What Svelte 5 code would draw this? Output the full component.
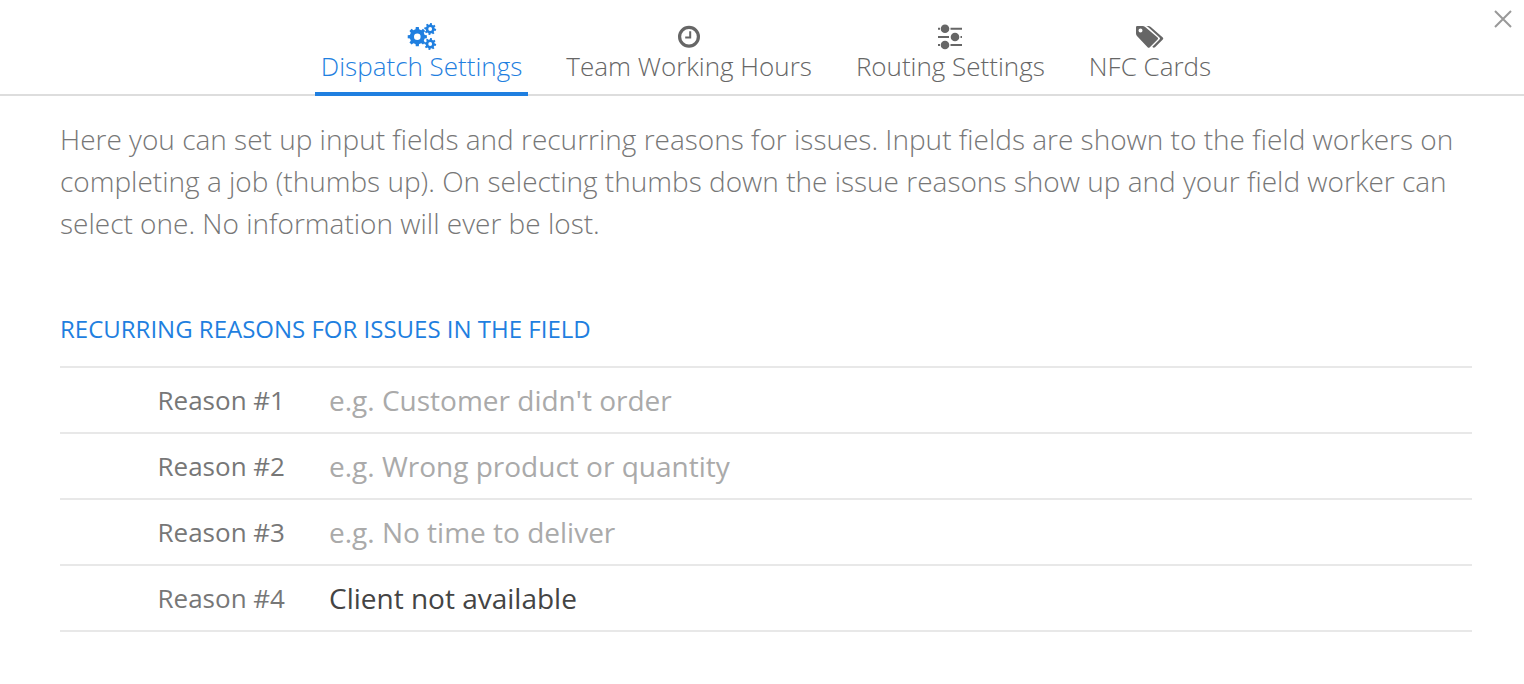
<script lang="ts">
	type Tab = {
		id: string;
		label: string;
	};

	type Reason = {
		placeholder: string;
		value: string;
	};

	const tabs: Tab[] = [
		{ id: "dispatch", label: "Dispatch Settings" },
		{ id: "hours", label: "Team Working Hours" },
		{ id: "routing", label: "Routing Settings" },
		{ id: "nfc", label: "NFC Cards" }
	];

	let active = $state("dispatch");

	let reasons: Reason[] = $state([
		{ placeholder: "e.g. Customer didn't order", value: "" },
		{ placeholder: "e.g. Wrong product or quantity", value: "" },
		{ placeholder: "e.g. No time to deliver", value: "" },
		{ placeholder: "", value: "Client not available" }
	]);

	// outline of a cog with a round hole, teeth start at the given angle
	function gear(cx: number, cy: number, outer: number, inner: number, hole: number, teeth: number, start = 0) {
		const step = (Math.PI * 2) / teeth;
		const points: string[] = [];
		for (let i = 0; i < teeth; i++) {
			const a = start + i * step;
			for (const [r, offset] of [[inner, -0.3], [outer, -0.2], [outer, 0.2], [inner, 0.3]]) {
				const x = cx + r * Math.cos(a + offset * step);
				const y = cy + r * Math.sin(a + offset * step);
				points.push(`${x.toFixed(2)} ${y.toFixed(2)}`);
			}
		}
		return `M${points.join("L")}ZM${cx - hole} ${cy}a${hole} ${hole} 0 1 0 ${hole * 2} 0a${hole} ${hole} 0 1 0 ${-hole * 2} 0Z`;
	}
</script>

<div class="settings">
	<header class="settings__header">
		<nav class="tabs" aria-label="Settings">
			{#each tabs as tab}
				<button
					type="button"
					class="tab"
					class:tab--active={active === tab.id}
					aria-current={active === tab.id ? "page" : undefined}
					onclick={() => (active = tab.id)}
				>
					<svg class="tab__icon" viewBox="0 0 30 28" aria-hidden="true">
						{#if tab.id === "dispatch"}
							<g fill="currentColor" fill-rule="evenodd">
								<path d={gear(10.3, 14.7, 9.7, 7.6, 3.3, 8)} />
								<path d={gear(23.2, 7, 6, 4.5, 1.9, 8, 0.15)} />
								<path d={gear(23.2, 22, 6, 4.5, 1.9, 8, 0.15)} />
							</g>
						{:else if tab.id === "hours"}
							<g fill="none" stroke="currentColor">
								<circle cx="15" cy="14.7" r="9.4" stroke-width="3.2" />
								<path d="M16.2 9.3v6.1h-5" stroke-width="2" />
							</g>
						{:else if tab.id === "routing"}
							<path
								d="M3 6.7h2M15.5 6.7H27M3 15h11M25.5 15H27M3 23h2M15.5 23H27"
								fill="none"
								stroke="currentColor"
								stroke-width="2"
							/>
							<g fill="currentColor">
								<circle cx="10" cy="6.7" r="4.3" />
								<circle cx="20" cy="15" r="4.3" />
								<circle cx="10" cy="23" r="4.3" />
							</g>
						{:else}
							<g fill="currentColor">
								<path
									fill-rule="evenodd"
									d="M1 5.2Q1 4 2.2 4H7.5Q9 4 10.2 5.1L22.6 15.4Q23.6 16.4 22.6 17.4L14.8 25.3Q13.7 26.3 12.6 25.3L2.2 14.2Q1 13 1 11.4ZM3.5 8.4a2 2 0 1 0 4 0a2 2 0 1 0-4 0Z"
								/>
								<path
									d="M10.8 4h2.4Q14.6 4 15.8 5.1L27.8 15.4Q28.8 16.4 27.8 17.4L20 25.3Q18.7 26.4 17.3 24.8L24.5 17.6Q25.6 16.4 24.5 15.4L13 5.1Q12 4.2 10.8 4Z"
								/>
							</g>
						{/if}
					</svg>
					<span>{tab.label}</span>
				</button>
			{/each}
		</nav>
		<button type="button" class="close" aria-label="Close">
			<svg viewBox="0 0 18 18" aria-hidden="true">
				<path d="M1 1l16 16M17 1L1 17" fill="none" stroke="currentColor" stroke-width="2" />
			</svg>
		</button>
	</header>

	<main class="settings__body">
		<p class="intro">
			Here you can set up input fields and recurring reasons for issues. Input fields are shown to the
			field workers on completing a job (thumbs up). On selecting thumbs down the issue reasons show up
			and your field worker can select one. No information will ever be lost.
		</p>

		<h2 class="title">Recurring reasons for issues in the field</h2>

		<ul class="reasons">
			{#each reasons as reason, i}
				<li class="reason">
					<label class="reason__label" for="reason-{i + 1}">Reason #{i + 1}</label>
					<input
						class="reason__input"
						id="reason-{i + 1}"
						type="text"
						placeholder={reason.placeholder}
						bind:value={reason.value}
					/>
				</li>
			{/each}
		</ul>
	</main>
</div>

<style>
	:global(body) {
		background: #fff;
	}

	.settings {
		font-family: "Open Sans", "Noto Sans", sans-serif;
		color: #777;
	}

	.settings__header {
		position: relative;
		border-bottom: 2px solid #ddd;
	}

	.tabs {
		display: flex;
		justify-content: center;
		gap: 32px;
		padding: 22px 0 0 8px;
	}

	.tab {
		display: flex;
		flex-direction: column;
		align-items: center;
		margin-bottom: -2px;
		padding: 0 6px 10px;
		border: 0;
		border-bottom: 4px solid transparent;
		background: none;
		color: #666;
		font: inherit;
		font-size: 26px;
		font-weight: 300;
		line-height: 32px;
		white-space: nowrap;
		cursor: pointer;
	}

	.tab--active {
		border-bottom-color: #1f7fe0;
		color: #1f7fe0;
	}

	.tab__icon {
		width: 30px;
		height: 28px;
	}

	.close {
		position: absolute;
		top: 10px;
		right: 12px;
		padding: 0;
		border: 0;
		background: none;
		color: #999;
		line-height: 0;
		cursor: pointer;
	}

	.close svg {
		width: 18px;
		height: 18px;
	}

	.settings__body {
		padding: 22px 52px 52px 60px;
	}

	.intro {
		margin: 0;
		font-size: 28px;
		font-weight: 300;
		line-height: 42px;
	}

	.title {
		margin: 68px 0 20px;
		color: #1f7fe0;
		font-size: 24px;
		font-weight: 400;
		line-height: 34px;
		text-transform: uppercase;
	}

	.reasons {
		margin: 0;
		padding: 0;
		border-top: 2px solid #e8e8e8;
		list-style: none;
	}

	.reason {
		display: flex;
		align-items: center;
		gap: 44px;
		border-bottom: 2px solid #e8e8e8;
	}

	.reason__label {
		width: 225px;
		font-size: 26px;
		line-height: 64px;
		text-align: right;
	}

	.reason__input {
		flex: 1;
		min-width: 0;
		height: 64px;
		padding: 0;
		border: 0;
		outline: 0;
		background: none;
		color: #444;
		font: inherit;
		font-size: 28px;
	}

	.reason__input::placeholder {
		color: #aaa;
		opacity: 1;
	}
</style>
